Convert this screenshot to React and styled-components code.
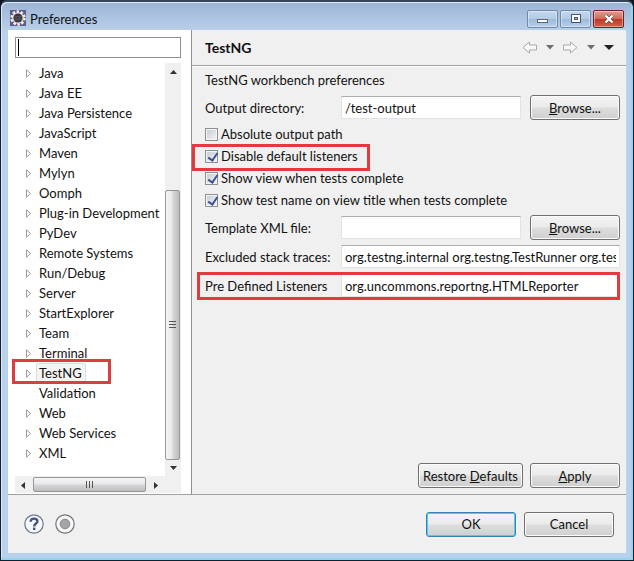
import styled, { createGlobalStyle } from "styled-components"

const GlobalStyle = createGlobalStyle`
  * {
    box-sizing: border-box;
  }

  body {
    margin: 0;
    background: #0a1420;
    color: #111;
    font-family: Lato, "Open Sans", sans-serif;
    font-size: 13px;
    line-height: 20px;
  }

  input, button {
    font: inherit;
    color: inherit;
  }
`

const Window = styled.div`
  min-height: 100vh;
  display: flex;
  flex-direction: column;
  padding: 0 7px 7px;
  border: 1px solid #10202e;
  border-top: 2px solid #34465c;
  border-radius: 7px 7px 0 0;
  background: linear-gradient(#9db5d5, #b9d1ea 30px, #b9d1ea);
  box-shadow: inset -2px -2px 0 #8fd6f0, inset 1px 1px 0 #dfeaf6;
`

const TitleBar = styled.header`
  height: 28px;
  display: flex;
  align-items: flex-start;
  gap: 4px;
  padding: 8px 2px 0;
`

const WindowTitle = styled.h1`
  flex: 1;
  margin: 0;
  font-size: 13px;
  font-weight: 400;
  line-height: 18px;
`

const Captions = styled.div`
  display: flex;
  gap: 2px;
`

const CaptionButton = styled.button`
  width: 31px;
  height: 18px;
  padding: 0;
  display: flex;
  align-items: center;
  justify-content: center;
  border: 1px solid ${(p) => (p.$close ? "#6b2222" : "#7189a8")};
  border-radius: 2px;
  background: ${(p) =>
    p.$close
      ? "linear-gradient(#e0a093, #cf6a58 48%, #bd3a26 52%, #d0604a)"
      : "linear-gradient(#c4d8ee, #b3cbe6 48%, #9dbadb 52%, #b6cfea)"};
  box-shadow: inset 0 0 0 1px rgba(255, 255, 255, 0.4);
`

const Main = styled.main`
  flex: 1;
  display: grid;
  grid-template-columns: 184px minmax(0, 1fr);
  background: #f0f0f0;
`

const Side = styled.nav`
  display: flex;
  flex-direction: column;
  padding: 7px 10px 1px 7px;
  background: #fff;
  border-right: 1px solid #8e8f97;
`

const Filter = styled.input`
  width: 100%;
  height: 21px;
  padding: 0 3px;
  border: 1px solid #8e8f8f;
  background: linear-gradient(#000, #000) 2px 1px / 1px 17px no-repeat #fff;
  caret-color: transparent;
  outline: none;
`

const TreeArea = styled.div`
  flex: 1;
  margin-top: 5px;
  display: grid;
  grid-template-columns: minmax(0, 1fr) 16px;
  grid-template-rows: 1fr 17px;
`

const Tree = styled.ul`
  margin: 0;
  padding: 0;
  list-style: none;
`

const TreeItem = styled.li`
  position: relative;
  height: 20px;
  display: flex;
  align-items: center;
  gap: 4px;
  padding-left: 10px;
  white-space: nowrap;
`

const Arrow = styled.span`
  width: 7px;
  display: flex;
`

const ItemText = styled.span`
  height: 20px;
  padding: 0 3px 0 2px;
  border: 1px solid ${(p) => (p.$selected ? "#dcdcdc" : "transparent")};
  border-radius: 2px;
  background: ${(p) => (p.$selected ? "#f4f4f4" : "none")};
  line-height: 18px;
`

// red frame laid over a spot of the form
const Mark = styled.span`
  position: absolute;
  inset: ${(p) => p.$inset};
  border: 3px solid #e03c3f;
  pointer-events: none;
`

const VScroll = styled.div`
  display: flex;
  flex-direction: column;
  align-items: center;
  padding: 7px 0 6px;
  background: #f0f0f0;
`

const VTrack = styled.div`
  flex: 1;
  width: 100%;
  display: flex;
  flex-direction: column;
  justify-content: flex-end;
  padding: 0 1px 6px 0;
`

const VThumb = styled.div`
  height: 70%;
  display: flex;
  align-items: center;
  justify-content: center;
  border: 1px solid #979797;
  border-radius: 2px;
  background: linear-gradient(90deg, #f5f5f5, #e9e9eb 45%, #d6d6d8 55%, #bcbcc0);
`

const HScroll = styled.div`
  display: flex;
  align-items: center;
  padding: 1px 7px 0 6px;
  background: #f0f0f0;
`

const HTrack = styled.div`
  flex: 1;
  height: 100%;
  padding: 0 8px 1px;
`

const HThumb = styled.div`
  width: 100%;
  height: 15px;
  display: flex;
  align-items: center;
  justify-content: center;
  border: 1px solid #979797;
  border-radius: 2px;
  background: linear-gradient(#f5f5f5, #e9e9eb 45%, #d6d6d8 55%, #bcbcc0);
`

const Corner = styled.div`
  background: #f0f0f0;
`

const Page = styled.section`
  display: flex;
  flex-direction: column;
`

const PageHeader = styled.div`
  height: 36px;
  display: flex;
  align-items: center;
  justify-content: space-between;
  padding: 0 12px 0 13px;
  border-bottom: 1px solid #a0a0a0;
  box-shadow: 0 1px 0 #fff;
`

const PageTitle = styled.h2`
  margin: 0;
  font-size: 14px;
  font-weight: 700;
`

const Toolbar = styled.div`
  display: flex;
  align-items: center;
  gap: 9px;
`

const ToolButton = styled.button`
  padding: 0;
  display: flex;
  border: 0;
  background: none;
`

const Form = styled.form`
  flex: 1;
  display: flex;
  flex-direction: column;
  padding: 4px 6px 6px 13px;
`

const Desc = styled.p`
  height: 23px;
  margin: 0;
`

const Row = styled.div`
  position: relative;
  height: 29px;
  display: grid;
  grid-template-columns: 136px minmax(0, 1fr) ${(p) => (p.$browse ? "90px" : "")};
  align-items: center;
`

const TextBox = styled.input`
  width: ${(p) => (p.$short ? "calc(100% - 9px)" : "100%")};
  height: 23px;
  padding: 0 3px;
  border: 1px solid #e3e3e6;
  border-top-color: #abadb3;
  background: #fff;
`

const Checks = styled.div`
  padding: 1px 0 2px;
`

const Check = styled.label`
  position: relative;
  height: 22px;
  display: flex;
  align-items: center;
  gap: 3px;
`

const Tick = styled.input`
  appearance: none;
  width: 13px;
  height: 13px;
  margin: 0;
  border: 1px solid #8e8f8f;
  background: linear-gradient(135deg, #c3c9d2, #f6f6f6);
  box-shadow: inset 0 0 0 1px #f4f4f4;

  &:checked::after {
    content: "";
    display: block;
    width: 4px;
    height: 8px;
    margin: 0 0 0 4px;
    border: solid #3a4f92;
    border-width: 0 2px 2px 0;
    transform: rotate(35deg);
  }
`

const Actions = styled.div`
  display: flex;
  justify-content: flex-end;
  gap: 7px;
  margin-top: auto;
`

const Button = styled.button`
  min-width: 90px;
  height: 25px;
  padding: 0 4px;
  border: 1px solid ${(p) => (p.$primary ? "#3c7fb1" : "#707070")};
  border-radius: 3px;
  background: linear-gradient(#f3f3f3, #ebebeb 48%, #dddddd 52%, #cfcfcf);
  box-shadow: inset 0 0 0 1px ${(p) => (p.$primary ? "#48d0f2" : "#fbfbfb")};
  line-height: 20px;
  white-space: nowrap;
`

const Footer = styled.footer`
  height: 59px;
  display: flex;
  align-items: center;
  justify-content: space-between;
  padding: 0 12px 0 16px;
  border-top: 1px solid #a0a0a0;
  background: #f0f0f0;
`

const Group = styled.div`
  display: flex;
  gap: ${(p) => p.$gap};
`

const items = [
  "Java",
  "Java EE",
  "Java Persistence",
  "JavaScript",
  "Maven",
  "Mylyn",
  "Oomph",
  "Plug-in Development",
  "PyDev",
  "Remote Systems",
  "Run/Debug",
  "Server",
  "StartExplorer",
  "Team",
  "Terminal",
  "TestNG",
  "Validation",
  "Web",
  "Web Services",
  "XML",
]

const Triangle = ({ points, w, h, fill = "#333" }) => (
  <svg width={w} height={h} viewBox={`0 0 ${w} ${h}`}>
    <polygon points={points} fill={fill} />
  </svg>
)

const AppIcon = () => (
  <svg width="16" height="16" viewBox="0 0 16 16">
    <rect width="16" height="16" fill="#5f5c8c" />
    <circle cx="8" cy="8" r="6.4" fill="none" stroke="#f2efe9" strokeWidth="2.6" strokeDasharray="2.4 1.6" />
    <circle cx="8" cy="8" r="5.8" fill="#e6e2e0" />
    <circle cx="8" cy="8" r="4.6" fill="#39353f" />
    <path d="M4.6 6.6h6.8M4.4 8.2h7.2M4.8 9.8h6.4" stroke="#6c6870" strokeWidth=".6" />
  </svg>
)

const HistoryArrow = ({ forward }) => (
  <svg width="15" height="13" viewBox="0 0 15 13">
    <path
      d={forward ? "M.5 4H7.5V1L14 6.5 7.5 12V9H.5Z" : "M14.5 4H7.5V1L1 6.5 7.5 12V9H14.5Z"}
      fill="#f8f8f8"
      stroke="#a9a9a9"
    />
  </svg>
)

const Grip = ({ vertical }) => (
  <svg width="8" height="8" viewBox="0 0 8 8">
    <path d={vertical ? "M0 .5H7M0 3.5H7M0 6.5H7" : "M.5 0V7M3.5 0V7M6.5 0V7"} stroke="#555" />
  </svg>
)

const HelpIcon = () => (
  <svg width="20" height="20" viewBox="0 0 20 20">
    <circle cx="10" cy="10" r="9.2" fill="#f7f8fb" stroke="#6b7790" strokeWidth="1.2" />
    <path
      d="M6.6 7.8C6.6 5.6 8 4.6 10 4.6S13.4 5.6 13.4 7.4C13.4 9.5 10.2 9.6 10.2 12.4"
      fill="none"
      stroke="#44567c"
      strokeWidth="2.4"
    />
    <rect x="9" y="13.6" width="2.4" height="2.4" fill="#44567c" />
  </svg>
)

const RecordIcon = () => (
  <svg width="20" height="20" viewBox="0 0 20 20">
    <circle cx="10" cy="10" r="9.2" fill="#f7f7f8" stroke="#75767e" strokeWidth="1.2" />
    <circle cx="10" cy="10" r="4.8" fill="#a5a5a8" stroke="#85868a" />
  </svg>
)

export default function App() {
  return (
    <>
      <GlobalStyle />
      <Window>
        <TitleBar>
          <AppIcon />
          <WindowTitle>Preferences</WindowTitle>
          <Captions>
            <CaptionButton aria-label="Minimize">
              <svg width="12" height="10" viewBox="0 0 12 10">
                <rect x=".5" y="5.5" width="10" height="3" fill="#fff" stroke="#5a6473" />
              </svg>
            </CaptionButton>
            <CaptionButton aria-label="Maximize">
              <svg width="12" height="10" viewBox="0 0 12 10">
                <rect x="1.5" y=".5" width="9" height="8" fill="#fff" stroke="#4a5470" />
                <rect x="4.5" y="3.5" width="3" height="2" fill="#a9c0dc" stroke="#4a5470" />
              </svg>
            </CaptionButton>
            <CaptionButton $close aria-label="Close">
              <svg width="12" height="10" viewBox="0 0 12 10">
                <path d="M2.5 1.5L9.5 8.5M9.5 1.5L2.5 8.5" stroke="#6b3a3a" strokeWidth="3.6" />
                <path d="M2.5 1.5L9.5 8.5M9.5 1.5L2.5 8.5" stroke="#fff" strokeWidth="2.4" />
              </svg>
            </CaptionButton>
          </Captions>
        </TitleBar>
        <Main>
          <Side>
            <Filter aria-label="Filter" autoFocus />
            <TreeArea>
              <Tree>
                {items.map((name) => (
                  <TreeItem key={name}>
                    <Arrow>
                      {name !== "Validation" && (
                        <svg width="7" height="9" viewBox="0 0 7 9">
                          <path d="M1.5 .8V8.2L5.5 4.5Z" fill="#fff" stroke="#9a9a9a" />
                        </svg>
                      )}
                    </Arrow>
                    <ItemText $selected={name === "TestNG"}>{name}</ItemText>
                    {name === "TestNG" && <Mark $inset="-4px 54px -1px -3px" />}
                  </TreeItem>
                ))}
              </Tree>
              <VScroll>
                <Triangle w={7} h={4} points="0,4 3.5,0 7,4" />
                <VTrack>
                  <VThumb>
                    <Grip vertical />
                  </VThumb>
                </VTrack>
                <Triangle w={7} h={4} points="0,0 7,0 3.5,4" />
              </VScroll>
              <HScroll>
                <Triangle w={4} h={7} points="4,0 4,7 0,3.5" />
                <HTrack>
                  <HThumb>
                    <Grip />
                  </HThumb>
                </HTrack>
                <Triangle w={4} h={7} points="0,0 4,3.5 0,7" />
              </HScroll>
              <Corner />
            </TreeArea>
          </Side>
          <Page>
            <PageHeader>
              <PageTitle>TestNG</PageTitle>
              <Toolbar>
                <ToolButton aria-label="Back">
                  <HistoryArrow />
                </ToolButton>
                <ToolButton aria-label="Back history">
                  <Triangle w={8} h={5} points="0,0 8,0 4,4.5" fill="#6e6e6e" />
                </ToolButton>
                <ToolButton aria-label="Forward">
                  <HistoryArrow forward />
                </ToolButton>
                <ToolButton aria-label="Forward history">
                  <Triangle w={8} h={5} points="0,0 8,0 4,4.5" fill="#6e6e6e" />
                </ToolButton>
                <ToolButton aria-label="Menu">
                  <Triangle w={10} h={5} points="0,0 10,0 5,5" fill="#222" />
                </ToolButton>
              </Toolbar>
            </PageHeader>
            <Form onSubmit={(e) => e.preventDefault()}>
              <Desc>TestNG workbench preferences</Desc>
              <Row $browse>
                <label htmlFor="output">Output directory:</label>
                <TextBox id="output" $short defaultValue="/test-output" />
                <Button type="button">
                  <u>B</u>rowse...
                </Button>
              </Row>
              <Checks>
                <Check>
                  <Tick type="checkbox" />
                  Absolute output path
                </Check>
                <Check>
                  <Tick type="checkbox" defaultChecked />
                  Disable default listeners
                  <Mark $inset="-1px 250px -4px -13px" />
                </Check>
                <Check>
                  <Tick type="checkbox" defaultChecked />
                  Show view when tests complete
                </Check>
                <Check>
                  <Tick type="checkbox" defaultChecked />
                  Show test name on view title when tests complete
                </Check>
              </Checks>
              <Row $browse>
                <label htmlFor="template">Template XML file:</label>
                <TextBox id="template" $short />
                <Button type="button">
                  <u>B</u>rowse...
                </Button>
              </Row>
              <Row>
                <label htmlFor="excluded">Excluded stack traces:</label>
                <TextBox
                  id="excluded"
                  defaultValue="org.testng.internal org.testng.TestRunner org.testng.TestNG"
                />
              </Row>
              <Row>
                <label htmlFor="listeners">Pre Defined Listeners</label>
                <TextBox id="listeners" defaultValue="org.uncommons.reportng.HTMLReporter" />
                <Mark $inset="1px 0 0 -8px" />
              </Row>
              <Actions>
                <Button type="button">
                  Restore <u>D</u>efaults
                </Button>
                <Button type="submit">
                  <u>A</u>pply
                </Button>
              </Actions>
            </Form>
          </Page>
        </Main>
        <Footer>
          <Group $gap="11px">
            <ToolButton aria-label="Help">
              <HelpIcon />
            </ToolButton>
            <ToolButton aria-label="Record">
              <RecordIcon />
            </ToolButton>
          </Group>
          <Group $gap="8px">
            <Button $primary>OK</Button>
            <Button>Cancel</Button>
          </Group>
        </Footer>
      </Window>
    </>
  )
}
